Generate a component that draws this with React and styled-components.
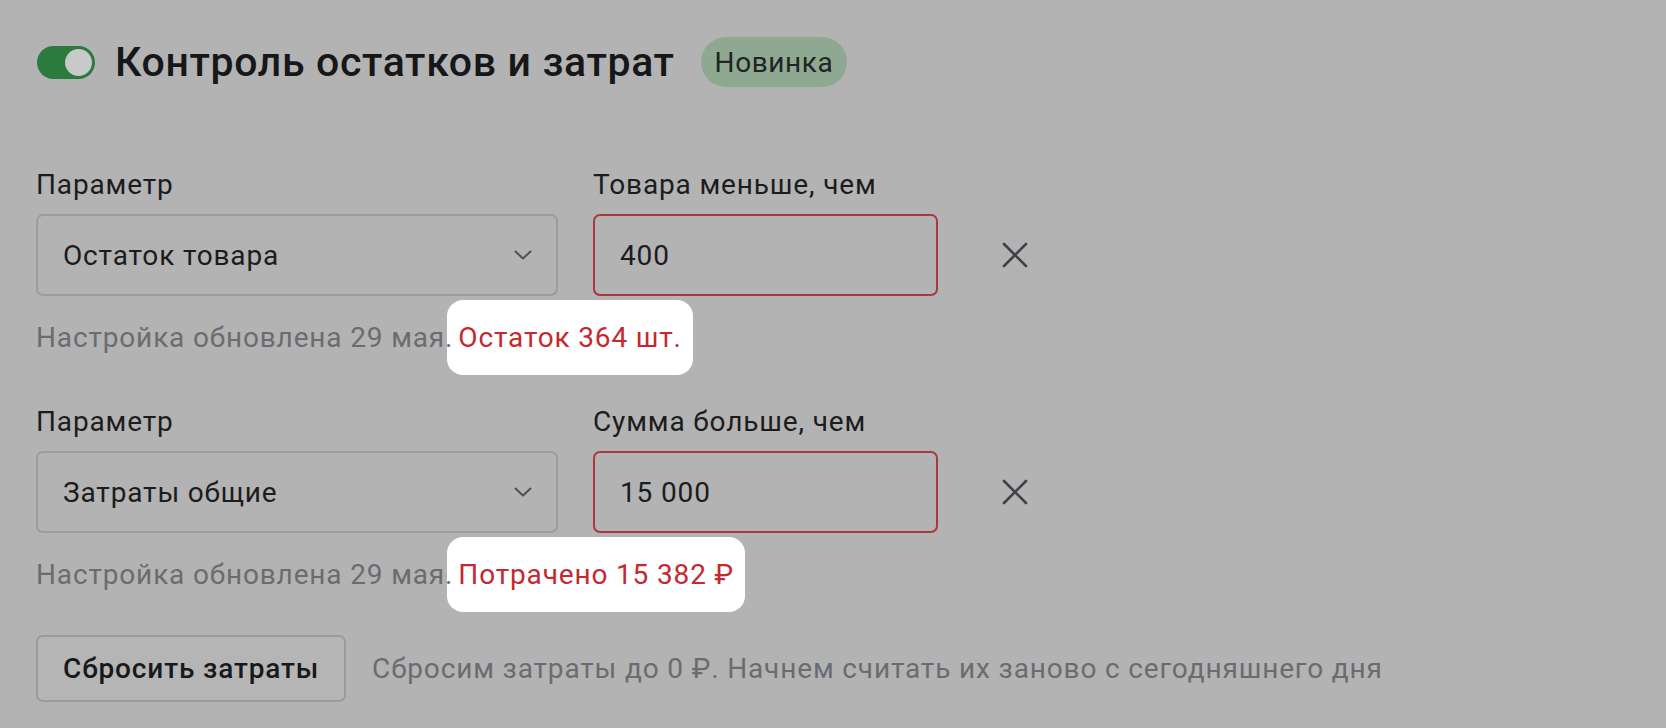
import React from 'react';
import styled, { createGlobalStyle } from 'styled-components';

const GlobalStyle = createGlobalStyle`
  html, body {
    margin: 0;
    padding: 0;
    background: #b3b3b3;
  }
  body {
    font-family: Roboto, "Noto Sans", "Liberation Sans", sans-serif;
    color: #1b1c1e;
  }
`;

const Page = styled.div`
  display: flex;
  flex-direction: column;
  align-items: flex-start;
  width: 1666px;
  height: 728px;
  box-sizing: border-box;
  padding: 37px 36px 0;
  background: #b3b3b3;
  overflow: hidden;
`;

const Header = styled.div`
  display: flex;
  align-items: center;
  height: 50px;
  margin-bottom: 82px;
`;

const Toggle = styled.div`
  position: relative;
  width: 58px;
  height: 33px;
  border-radius: 17px;
  background: #2b7a3e;
  margin-left: 1px;
  margin-right: 20px;
  flex: none;

  &::after {
    content: '';
    position: absolute;
    right: 3px;
    top: 3px;
    width: 27px;
    height: 27px;
    border-radius: 50%;
    background: #c9c9c9;
  }
`;

const Title = styled.h1`
  margin: 0;
  font-size: 41px;
  font-weight: 500;
  line-height: 50px;
  color: #161719;
  letter-spacing: 0.65px;
`;

const Badge = styled.span`
  display: inline-flex;
  align-items: center;
  height: 50px;
  padding: 0 14px;
  margin-left: 26px;
  border-radius: 25px;
  background: #8fa891;
  color: #1d2620;
  font-size: 28px;
  letter-spacing: 0.6px;
`;

const Stack = styled.div`
  position: relative;
  z-index: 0;
  display: flex;
  flex-direction: column;
  gap: 52px;
`;

const Rule = styled.section``;

const Fields = styled.div`
  display: flex;
  align-items: flex-end;
`;

const Field = styled.label`
  display: flex;
  flex-direction: column;
  width: ${p => p.$width}px;
  margin-right: ${p => p.$gap || 0}px;
`;

const Label = styled.span`
  font-size: 28px;
  letter-spacing: 0.85px;
  line-height: 32px;
  color: #1b1c1e;
  margin-bottom: 13px;
`;

const Box = styled.div`
  box-sizing: border-box;
  height: 82px;
  display: flex;
  align-items: center;
  justify-content: space-between;
  padding: 0 24px 0 25px;
  border: 2px solid ${p => (p.$error ? '#a8393c' : '#9c9c9c')};
  border-radius: 7px;
  background: #b3b3b3;
  font-size: 28px;
  letter-spacing: 0.85px;
  color: #1b1c1e;
`;

const Chevron = () => (
  <svg width="18" height="10" viewBox="0 0 18 10" fill="none">
    <path d="M1.5 1.5L9 8.5L16.5 1.5" stroke="#4e5157" strokeWidth="2" strokeLinecap="round" strokeLinejoin="round" />
  </svg>
);

const Remove = styled.button`
  display: flex;
  align-items: center;
  justify-content: center;
  width: 44px;
  height: 82px;
  margin-left: 55px;
  padding: 0;
  border: 0;
  background: transparent;
  cursor: pointer;
`;

const Hint = styled.p`
  margin: 26px 0 0;
  font-size: 28px;
  letter-spacing: 0.85px;
  line-height: 32px;
  color: #696c71;
  white-space: nowrap;
`;

const Spot = styled.span`
  position: relative;
  margin-left: 5px;
  color: #c5282e;

  &::before {
    content: '';
    position: absolute;
    left: -11px;
    right: -11px;
    top: -21px;
    bottom: -21px;
    background: #ffffff;
    border-radius: 16px;
    z-index: -1;
  }
`;

const SpotText = styled.span`
  position: relative;
  z-index: 1;
`;

const Footer = styled.div`
  display: flex;
  align-items: center;
  margin-top: 44px;
`;

const Button = styled.button`
  box-sizing: border-box;
  height: 67px;
  padding: 0 25px;
  border: 2px solid #9b9b9b;
  border-radius: 7px;
  background: #b5b5b5;
  font-family: inherit;
  font-size: 28px;
  letter-spacing: 0.85px;
  font-weight: 500;
  color: #18191b;
  cursor: pointer;
`;

const Note = styled.span`
  margin-left: 26px;
  font-size: 28px;
  letter-spacing: 0.85px;
  color: #696c71;
`;

const rules = [
  {
    param: 'Остаток товара',
    label: 'Товара меньше, чем',
    value: '400',
    status: 'Остаток 364 шт.',
  },
  {
    param: 'Затраты общие',
    label: 'Сумма больше, чем',
    value: '15 000',
    status: 'Потрачено 15 382 ₽',
  },
];

export default function App() {
  return (
    <Page>
      <GlobalStyle />
      <Header>
        <Toggle />
        <Title>Контроль остатков и затрат</Title>
        <Badge>Новинка</Badge>
      </Header>

      <Stack>
        {rules.map(rule => (
          <Rule key={rule.param}>
            <Fields>
              <Field $width={522} $gap={35}>
                <Label>Параметр</Label>
                <Box>
                  <span>{rule.param}</span>
                  <Chevron />
                </Box>
              </Field>
              <Field $width={345}>
                <Label>{rule.label}</Label>
                <Box $error>
                  <span>{rule.value}</span>
                </Box>
              </Field>
              <Remove aria-label="Удалить">
                <svg width="26" height="26" viewBox="0 0 26 26" fill="none">
                  <path d="M2 2L24 24M24 2L2 24" stroke="#3d4148" strokeWidth="2.6" strokeLinecap="round" />
                </svg>
              </Remove>
            </Fields>
            <Hint>
              Настройка обновлена 29 мая.
              <Spot>
                <SpotText>{rule.status}</SpotText>
              </Spot>
            </Hint>
          </Rule>
        ))}
      </Stack>

      <Footer>
        <Button>Сбросить затраты</Button>
        <Note>Сбросим затраты до 0 ₽. Начнем считать их заново с сегодняшнего дня</Note>
      </Footer>
    </Page>
  );
}
